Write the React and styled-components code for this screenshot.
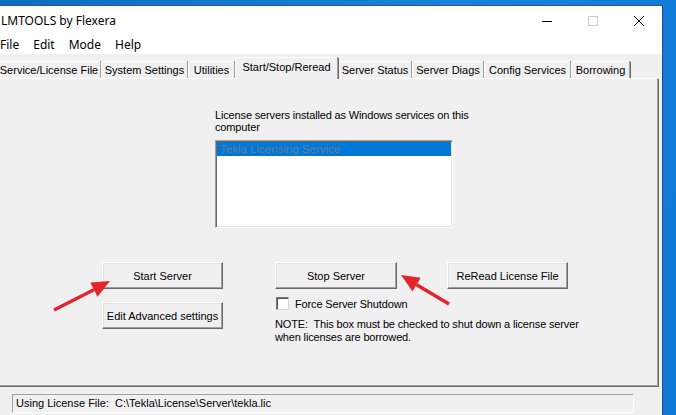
import React from "react";
import styled, { createGlobalStyle } from "styled-components";

const Global = createGlobalStyle`
  html, body { margin: 0; padding: 0; }
  body { width: 676px; height: 415px; overflow: hidden; }
  * { box-sizing: border-box; }
`;

const Desktop = styled.div`
  position: relative;
  width: 676px;
  height: 415px;
  overflow: hidden;
  padding-top: 5px;
  background: linear-gradient(100deg, #0d6cc4 0%, #1684dc 60%, #0f7ad6 100%);
`;

const Window = styled.div`
  width: 663px;
  height: 410px;
  display: flex;
  flex-direction: column;
  background: #f0f0f0;
  border-top: 1px solid #2a5784;
  border-right: 1px solid #1f4b76;
`;

const TitleBar = styled.div`
  height: 29px;
  display: flex;
  align-items: center;
  background: #ffffff;
`;

const Title = styled.div`
  flex: 1;
  padding-left: 1px;
  font-family: "Noto Sans", "Open Sans", sans-serif;
  font-size: 12px;
  color: #000;
`;

const CtrlButton = styled.div`
  width: 46px;
  height: 29px;
  display: flex;
  align-items: center;
  justify-content: center;
`;

const MenuBar = styled.div`
  height: 19px;
  display: flex;
  align-items: center;
  gap: 14px;
  background: #ffffff;
  font-family: "Noto Sans", "Open Sans", sans-serif;
  font-size: 12px;
  color: #000;
`;

const MenuItem = styled.span``;

const Body = styled.div`
  flex: 1;
  display: flex;
  flex-direction: column;
  padding-right: 4px;
  font-family: "Liberation Sans", Arial, sans-serif;
  font-size: 11px;
  color: #000;
`;

const TabStrip = styled.div`
  height: 24px;
  display: flex;
  align-items: flex-end;
  margin-left: -3px;
`;

const Tab = styled.div`
  position: relative;
  width: ${(p) => p.$w}px;
  height: ${(p) => (p.$active ? 22 : 17)}px;
  margin-bottom: ${(p) => (p.$active ? -1 : 0)}px;
  z-index: ${(p) => (p.$active ? 2 : 1)};
  display: flex;
  justify-content: center;
  padding-top: ${(p) => (p.$active ? 3 : 2)}px;
  white-space: nowrap;
  background: #f0f0f0;
  border-top: 1px solid #ffffff;
  border-left: 1px solid #ffffff;
  border-right: 1px solid #a0a0a0;
  box-shadow: 1px 0 0 #696969;
  border-top-left-radius: 2px;
  border-top-right-radius: 2px;
`;

const Panel = styled.div`
  position: relative;
  height: 308px;
  margin-left: -2px;
  display: flex;
  flex-direction: column;
  letter-spacing: -0.15px;
  border-top: 1px solid #ffffff;
  border-right: 1px solid #a0a0a0;
  border-bottom: 1px solid #a0a0a0;
  box-shadow: 1px 1px 0 #696969;
`;

const ListLabel = styled.div`
  margin-left: 217px;
  margin-top: 30px;
  width: 262px;
  line-height: 12px;
`;

const ListBox = styled.div`
  margin-left: 217px;
  margin-top: 7px;
  width: 238px;
  height: 88px;
  background: #ffffff;
  border: 1px solid;
  border-color: #a0a0a0 #ffffff #ffffff #a0a0a0;
  box-shadow: inset 1px 1px 0 #696969, inset -1px -1px 0 #e3e3e3;
  padding: 1px;
`;

const ListItem = styled.div`
  height: 14px;
  line-height: 14px;
  padding-left: 3px;
  background: ${(p) => (p.$selected ? "#0078d7" : "transparent")};
  color: ${(p) => (p.$selected ? "#6a7b93" : "#000")};
  font-size: 11.5px;
  letter-spacing: 0;
  white-space: nowrap;
`;

const Controls = styled.div`
  display: flex;
  margin-left: 104px;
  margin-top: 34px;
`;

const Column = styled.div`
  display: flex;
  flex-direction: column;
  gap: ${(p) => p.$gap || 0}px;
  margin-left: ${(p) => p.$ml || 0}px;
`;

const Row = styled.div`
  display: flex;
  gap: ${(p) => p.$gap || 0}px;
`;

const Button = styled.div`
  width: ${(p) => p.$w}px;
  height: 27px;
  display: flex;
  align-items: center;
  justify-content: center;
  white-space: nowrap;
  background: #f0f0f0;
  border: 1px solid;
  border-color: #ffffff #696969 #696969 #ffffff;
  box-shadow: inset -1px -1px 0 #a0a0a0, inset 1px 1px 0 #e3e3e3;
  font-size: 11px;
  letter-spacing: 0;
`;

const CheckRow = styled.label`
  display: flex;
  align-items: center;
  gap: 6px;
  margin-top: 8px;
  margin-left: 1px;
  height: 13px;
`;

const CheckBox = styled.span`
  width: 13px;
  height: 13px;
  background: #ffffff;
  border: 1px solid;
  border-color: #7a7a7a #d8d8d8 #d8d8d8 #7a7a7a;
  box-shadow: inset 1px 1px 0 #505050;
`;

const Note = styled.div`
  margin-top: 8px;
  line-height: 13px;
  white-space: pre;
`;

const StatusBar = styled.div`
  margin-top: 8px;
  margin-left: 12px;
  width: 622px;
  height: 19px;
  line-height: 17px;
  padding-left: 3px;
  white-space: pre;
  border: 1px solid;
  border-color: #a0a0a0 #ffffff #ffffff #a0a0a0;
`;

const Overlay = styled.svg`
  position: absolute;
  left: 0;
  top: 0;
  pointer-events: none;
`;

const tabs = [
  { label: "Service/License File", w: 104 },
  { label: "System Settings", w: 87 },
  { label: "Utilities", w: 47 },
  { label: "Start/Stop/Reread", w: 103, active: true },
  { label: "Server Status", w: 74 },
  { label: "Server Diags", w: 72 },
  { label: "Config Services", w: 87 },
  { label: "Borrowing", w: 59 },
];

function Arrow({ tail, tip, c1, c2 }) {
  return (
    <g>
      <line x1={tail[0]} y1={tail[1]} x2={(c1[0] + c2[0]) / 2} y2={(c1[1] + c2[1]) / 2} stroke="#e3262c" strokeWidth="3.5" />
      <polygon points={`${tip.join(",")} ${c1.join(",")} ${c2.join(",")}`} fill="#e3262c" />
    </g>
  );
}

export default function App() {
  return (
    <>
      <Global />
      <Desktop>
        <Window>
          <TitleBar>
            <Title>LMTOOLS by Flexera</Title>
            <CtrlButton>
              <svg width="10" height="10" viewBox="0 0 10 10">
                <line x1="0" y1="5.5" x2="10" y2="5.5" stroke="#000" strokeWidth="1" />
              </svg>
            </CtrlButton>
            <CtrlButton>
              <svg width="10" height="10" viewBox="0 0 10 10">
                <rect x="0.5" y="0.5" width="9" height="9" fill="none" stroke="#cccccc" strokeWidth="1" />
              </svg>
            </CtrlButton>
            <CtrlButton>
              <svg width="10" height="10" viewBox="0 0 10 10">
                <path d="M0 0 L10 10 M10 0 L0 10" stroke="#000" strokeWidth="1" />
              </svg>
            </CtrlButton>
          </TitleBar>
          <MenuBar>
            <MenuItem>File</MenuItem>
            <MenuItem>Edit</MenuItem>
            <MenuItem>Mode</MenuItem>
            <MenuItem>Help</MenuItem>
          </MenuBar>
          <Body>
            <TabStrip>
              {tabs.map((t) => (
                <Tab key={t.label} $w={t.w} $active={t.active}>
                  {t.label}
                </Tab>
              ))}
            </TabStrip>
            <Panel>
              <ListLabel>License servers installed as Windows services on this computer</ListLabel>
              <ListBox>
                <ListItem $selected>Tekla Licensing Service</ListItem>
              </ListBox>
              <Controls>
                <Column $gap={13}>
                  <Button $w={121}>Start Server</Button>
                  <Button $w={121}>Edit Advanced settings</Button>
                </Column>
                <Column $ml={52}>
                  <Row $gap={50}>
                    <Button $w={122}>Stop Server</Button>
                    <Button $w={121}>ReRead License File</Button>
                  </Row>
                  <CheckRow>
                    <CheckBox />
                    <span>Force Server Shutdown</span>
                  </CheckRow>
                  <Note>{"NOTE:  This box must be checked to shut down a license server\nwhen licenses are borrowed."}</Note>
                </Column>
              </Controls>
            </Panel>
            <StatusBar>{"Using License File:  C:\\Tekla\\License\\Server\\tekla.lic"}</StatusBar>
          </Body>
        </Window>
        <Overlay width="676" height="415" viewBox="0 0 676 415">
          <Arrow tail={[54, 310]} tip={[110, 281]} c1={[90.3, 282.6]} c2={[97.5, 296.8]} />
          <Arrow tail={[449, 304]} tip={[401, 275]} c1={[420.7, 277.8]} c2={[412.5, 291.6]} />
        </Overlay>
      </Desktop>
    </>
  );
}
